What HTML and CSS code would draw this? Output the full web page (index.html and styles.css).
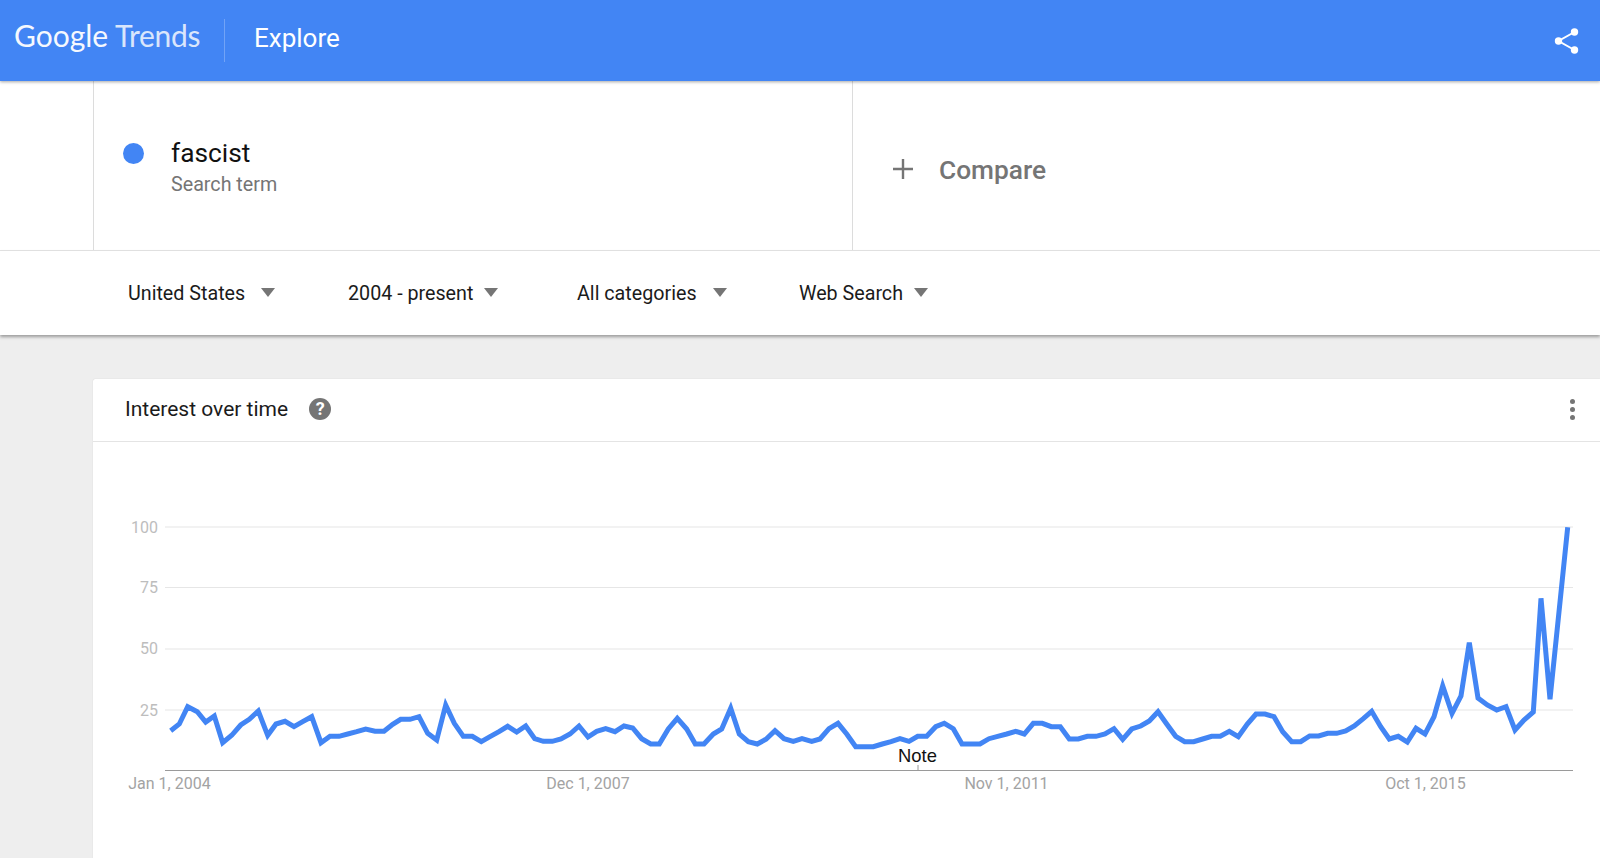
FILE: index.html

```html
<!DOCTYPE html>
<html>
<head>
    <meta charset="utf-8">
    <title>Google Trends - Explore</title>
    <link rel="stylesheet" href="styles.css">
</head>
<body>
    <header class="topbar">
        <div class="logo"><span class="logo-google">Google</span> <span class="logo-trends">Trends</span></div>
        <div class="topbar-title">Explore</div>
        <svg class="share" width="28" height="28" viewBox="0 0 28 28">
            <path d="M21.500 5 L5.500 14 L21.500 23" fill="none" stroke="#fff" stroke-width="2"/>
            <circle cx="21.500" cy="5" r="3.700" fill="#fff"/>
            <circle cx="5.500" cy="14" r="3.700" fill="#fff"/>
            <circle cx="21.500" cy="23" r="3.700" fill="#fff"/>
        </svg>
    </header>

    <section class="search-row">
        <div class="search-gutter"></div>
        <div class="term">
            <span class="term-dot"></span>
            <div>
                <div class="term-name">fascist</div>
                <div class="term-type">Search term</div>
            </div>
        </div>
        <div class="compare">
            <svg class="compare-plus" width="20" height="20" viewBox="0 0 20 20">
                <path d="M10 0 V20 M0 10 H20" stroke="#757575" stroke-width="2.4"/>
            </svg>
            <span>Compare</span>
        </div>
    </section>

    <section class="filters">
        <div class="filter filter-geo">United States<span class="caret caret-wide"></span></div>
        <div class="filter filter-time">2004 - present<span class="caret"></span></div>
        <div class="filter filter-cat">All categories<span class="caret caret-wide"></span></div>
        <div class="filter">Web Search<span class="caret"></span></div>
    </section>

    <main class="content">
        <div class="card">
            <div class="card-head">
                <span class="card-title">Interest over time</span>
                <span class="help">?</span>
                <div class="more"><i></i><i></i><i></i></div>
            </div>
            <svg class="chart" width="1507" height="420" viewBox="93 442 1507 420">
                <g class="grid">
                    <line x1="165" y1="527" x2="1573" y2="527"/>
                    <line x1="165" y1="587.5" x2="1573" y2="587.5"/>
                    <line x1="165" y1="649" x2="1573" y2="649"/>
                    <line x1="165" y1="710" x2="1573" y2="710"/>
                </g>
                <line class="axis" x1="165" y1="770.5" x2="1573" y2="770.5"/>
                <line class="axis" x1="918" y1="765" x2="918" y2="770"/>
                <g class="y-labels">
                    <text x="158" y="533">100</text>
                    <text x="158" y="593">75</text>
                    <text x="158" y="654">50</text>
                    <text x="158" y="716">25</text>
                </g>
                <g class="x-labels">
                    <text x="169.500" y="789">Jan 1, 2004</text>
                    <text x="588" y="789">Dec 1, 2007</text>
                    <text x="1006.500" y="789">Nov 1, 2011</text>
                    <text x="1425.500" y="789">Oct 1, 2015</text>
                </g>
                <polyline class="trend" points="170.7,730.7 179.3,724 187.7,706.7 197.3,711.7 205.7,722 214.3,716 222.7,742.7 231.7,735.3 240.7,725 249.3,719.3 258.3,711 267.7,735.3 276,724 285,721.3 294,726.7 302.7,721.7 311.7,716.7 321,742.7 330,736.3 339,736.3 347.7,734 356.7,731.7 365.7,729 375,731.3 384,731.3 392.7,724.3 400.7,719.3 410,719.3 419,716.7 427.7,733.3 436.7,740 445.7,705 454.3,723.3 463.3,736.3 472.3,736.3 481.3,741.7 490,736.7 499,731.7 507.7,726.3 516.7,732 525.7,726 534.7,738.7 543.3,741.3 552.3,741.3 561,739 570,734 579,726 588,737 596.7,731.3 605.7,728.7 615,731.7 624,726 632.7,728 641.7,738.7 650.7,744 659.3,744 668.3,729 677.3,718.3 686.7,729 695.3,744 704,744 713.3,734 721.7,729 730.7,708.3 739.3,734 748.3,741.7 757.3,744 766,739.3 775,730.7 784,738.7 793.3,741.3 802,738.7 811.7,741.3 820,739 829,728.7 838,723.3 846.7,734 855.7,746.7 864.3,746.7 873.3,746.7 882.3,744 891,741.7 900,738.7 909,741.3 917.7,736.3 926.7,736.3 935.7,726.7 944.3,723.3 953.3,728.7 962,744 971,744 980,744 989,738.7 997.7,736.3 1006.7,734 1015.7,731.3 1024.3,734 1033.3,723.3 1042.3,723.3 1051.3,726.7 1060.3,726.7 1069.3,739 1078.3,739 1087.3,736.3 1096,736.3 1105,734 1114,728.7 1122.7,739.3 1131.7,729 1140.7,726 1149.3,721 1158,711.7 1166.7,724 1175.7,736.3 1184.7,741.7 1193.7,741.7 1202.7,739 1211.7,736.3 1220.3,736.3 1229.3,731.3 1238.3,736.7 1247.3,724 1256,714 1265,714 1274,716.7 1282.7,731.7 1291.7,741.7 1300.7,741.7 1309.7,736 1318.7,736 1327.7,733.3 1336.7,733.3 1345.7,731 1354.3,726 1363.3,718.7 1371.7,711.3 1380.7,726.7 1389.3,739 1398.3,736.3 1407.3,742 1416,728.3 1425,734 1434,716.7 1442.7,686 1452,713.3 1461,696 1469.3,642.7 1478,698 1487.3,705 1496.7,710 1506,706.7 1515,730 1524,720 1533.3,712 1541,598.3 1550,699.3 1567.7,527.3"/>
                <text class="note" x="917.500" y="762">Note</text>
            </svg>
        </div>
    </main>
</body>
</html>
```

FILE: styles.css

```css
* {
    box-sizing: border-box;
}

html, body {
    height: 100%;
}

body {
    margin: 0;
    display: flex;
    flex-direction: column;
    height: 100vh;
    overflow: hidden;
    font-family: Roboto, Arial, sans-serif;
    background-color: #eeeeee;
    color: #111;
}

.topbar {
    position: relative;
    z-index: 3;
    display: flex;
    align-items: center;
    flex: 0 0 81px;
    padding-left: 14px;
    background-color: #4285f4;
    color: #fff;
    box-shadow: 0 1px 3px rgba(0,0,0,0.35);
}

.logo {
    width: 210px;
    height: 43px;
    margin-top: -6px;
    font-family: Lato, "Open Sans", sans-serif;
    font-size: 30px;
    line-height: 39px;
    white-space: nowrap;
    opacity: 0.95;
}

.logo-trends {
    margin-left: -1px;
    letter-spacing: -0.3px;
    opacity: 0.85;
}

.topbar-title {
    height: 43px;
    padding-left: 29px;
    border-left: 1px solid rgba(255,255,255,0.25);
    font-size: 26px;
    line-height: 38px;
}

.share {
    margin-left: auto;
    margin-right: 19px;
}

.search-row {
    display: flex;
    flex: 0 0 170px;
    background-color: #fff;
    border-bottom: 1px solid #e4e4e4;
}

.search-gutter {
    width: 94px;
    border-right: 1px solid #dcdcdc;
}

.term {
    display: flex;
    width: 759px;
    padding: 56px 0 0 29px;
    border-right: 1px solid #dcdcdc;
}

.term-dot {
    width: 21px;
    height: 21px;
    margin: 6px 27px 0 0;
    border-radius: 50%;
    background-color: #4285f4;
}

.term-name {
    font-size: 26.3px;
    line-height: 32px;
    color: #111;
}

.term-type {
    margin-top: 4px;
    font-size: 19.7px;
    line-height: 24px;
    color: #757575;
}

.compare {
    display: flex;
    align-items: center;
    padding: 8px 0 0 40px;
    font-size: 26.3px;
    font-weight: 500;
    color: #757575;
}

.compare-plus {
    margin-right: 26px;
    margin-top: -2px;
}

.compare span {
    margin-top: 1px;
}

.filters {
    position: relative;
    z-index: 2;
    display: flex;
    align-items: center;
    flex: 0 0 84px;
    padding: 0 0 0 128px;
    background-color: #fff;
    box-shadow: 0 2px 3px rgba(0,0,0,0.35);
    font-size: 19.7px;
}

.filter {
    display: flex;
    align-items: center;
    color: #1b1b1b;
}

.filter-geo {
    width: 220px;
}

.filter-time {
    width: 229px;
}

.filter-cat {
    width: 222px;
}

.caret {
    width: 0;
    height: 0;
    margin-left: 11px;
    margin-top: -2px;
    border-left: 7px solid transparent;
    border-right: 7px solid transparent;
    border-top: 9px solid #757575;
}

.caret-wide {
    margin-left: 16px;
}

.content {
    flex: 1;
    padding: 44px 0 0 93px;
}

.card {
    height: 100%;
    background-color: #fff;
    border-radius: 2px 0 0 0;
    box-shadow: 0 0 1px rgba(0,0,0,0.2);
}

.card-head {
    display: flex;
    align-items: center;
    height: 63px;
    padding: 0 0 2px 32px;
    border-bottom: 1px solid #e4e4e4;
}

.card-title {
    font-size: 21px;
    color: #1b1b1b;
}

.help {
    width: 22px;
    height: 22px;
    margin-left: 21px;
    border-radius: 50%;
    background-color: #757575;
    color: #fff;
    font-size: 18px;
    font-weight: 700;
    line-height: 22px;
    text-align: center;
}

.more {
    display: flex;
    flex-direction: column;
    gap: 3px;
    margin-left: auto;
    margin-right: 25px;
}

.more i {
    display: block;
    width: 5px;
    height: 5px;
    border-radius: 50%;
    background-color: #757575;
}

.chart {
    display: block;
}

.grid line {
    stroke: #e6e6e6;
    stroke-width: 1.2;
}

.axis {
    stroke: #9a9a9a;
    stroke-width: 1;
}

.y-labels text {
    font-size: 16px;
    fill: #bdbdbd;
    text-anchor: end;
}

.x-labels text {
    font-size: 16px;
    fill: #a3a3a3;
    text-anchor: middle;
}

.trend {
    fill: none;
    stroke: #4285f4;
    stroke-width: 5;
    stroke-linejoin: miter;
}

.note {
    font-family: "Liberation Sans", Arial, sans-serif;
    font-size: 18.4px;
    fill: #111;
    text-anchor: middle;
}
```
